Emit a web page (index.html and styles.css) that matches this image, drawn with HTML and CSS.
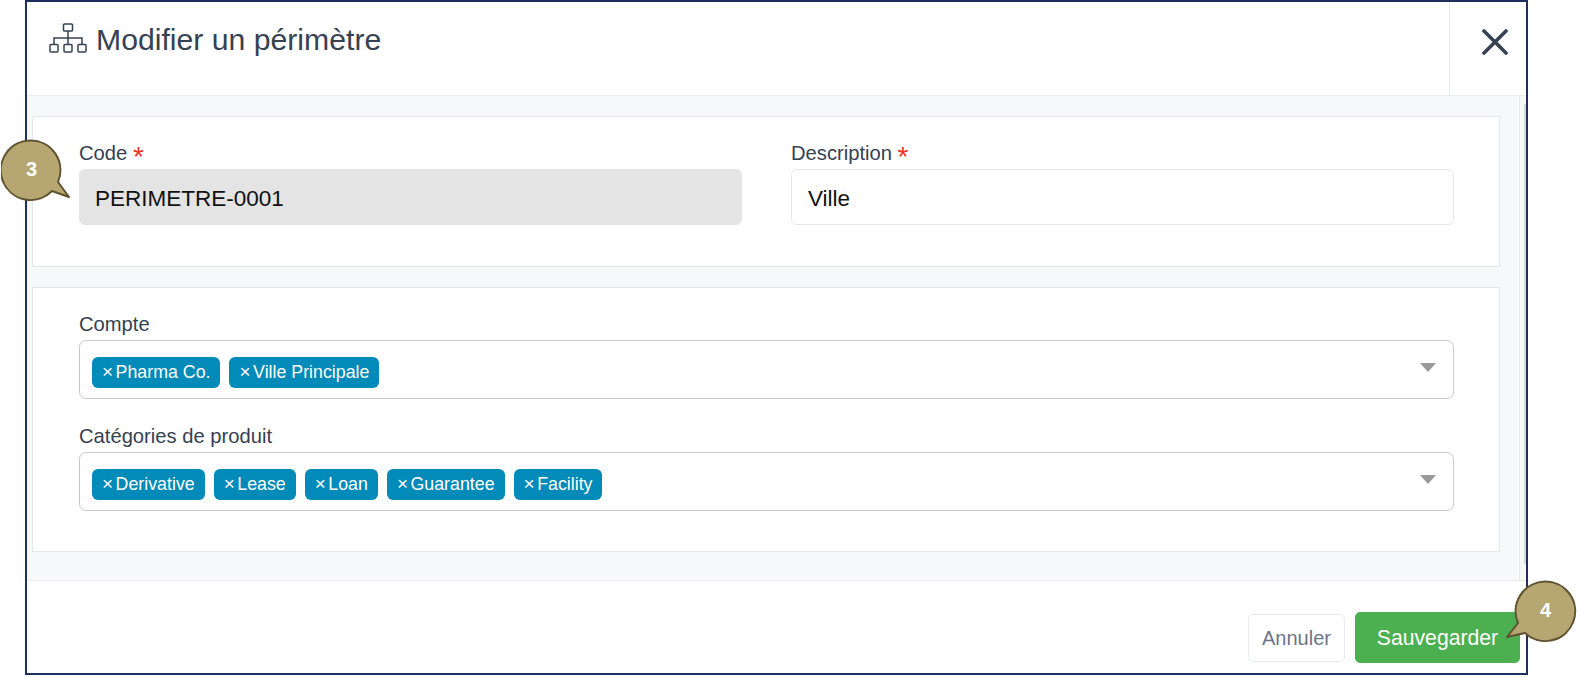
FILE: index.html
```html
<!DOCTYPE html>
<html lang="fr">
<head>
<meta charset="utf-8">
<title>Modifier un périmètre</title>
<link rel="stylesheet" href="styles.css">
</head>
<body>
<div class="modal">
  <header class="modal-header">
    <div class="title">
      <svg class="title-icon" viewBox="0 0 38 30" width="38" height="30" fill="none" stroke="#364152" stroke-width="1.5">
        <rect x="14.5" y="1" width="9" height="7" rx="1"/>
        <rect x="1" y="21.5" width="8" height="7.5" rx="1"/>
        <rect x="15" y="21.5" width="8" height="7.5" rx="1"/>
        <rect x="29" y="21.5" width="8" height="7.5" rx="1"/>
        <path d="M19 8v13.5M5 21.5v-6.5h28v6.5"/>
      </svg>
      <h1>Modifier un périmètre</h1>
    </div>
    <div class="close-cell">
      <svg viewBox="0 0 26 26" width="26" height="26" fill="none" stroke="#364152" stroke-width="3.6" stroke-linecap="round">
        <path d="M2 2l22 22M24 2L2 24"/>
      </svg>
    </div>
  </header>
  <div class="modal-body">
    <div class="scroll-area">
      <section class="panel panel-top">
        <div class="field">
          <label>Code <span class="req">*</span></label>
          <div class="input input-disabled">PERIMETRE-0001</div>
        </div>
        <div class="field">
          <label>Description <span class="req">*</span></label>
          <div class="input">Ville</div>
        </div>
      </section>
      <section class="panel panel-bottom">
        <div class="select-field">
          <label>Compte</label>
          <div class="select">
            <span class="tag"><i>×</i>Pharma Co.</span>
            <span class="tag"><i>×</i>Ville Principale</span>
            <span class="caret"></span>
          </div>
        </div>
        <div class="select-field">
          <label>Catégories de produit</label>
          <div class="select">
            <span class="tag"><i>×</i>Derivative</span>
            <span class="tag"><i>×</i>Lease</span>
            <span class="tag"><i>×</i>Loan</span>
            <span class="tag"><i>×</i>Guarantee</span>
            <span class="tag"><i>×</i>Facility</span>
            <span class="caret"></span>
          </div>
        </div>
      </section>
    </div>
    <div class="scrollbar"></div>
  </div>
  <footer class="modal-footer">
    <button class="btn btn-cancel">Annuler</button>
    <button class="btn btn-save">Sauvegarder</button>
  </footer>
</div>
<div class="bubble bubble-3">
  <svg viewBox="0 0 72 68" width="72" height="68"><path d="M57 43L68 58L51 52A29.8 29.8 0 1 1 57 43Z" fill="#b5a672" stroke="#5f5230" stroke-width="2" stroke-linejoin="round"/></svg>
  <span>3</span>
</div>
<div class="bubble bubble-4">
  <svg viewBox="0 0 72 68" width="72" height="68"><path d="M13 43A29.8 29.8 0 1 1 20 53L2 57Z" fill="#b5a672" stroke="#5f5230" stroke-width="2" stroke-linejoin="round"/></svg>
  <span>4</span>
</div>
</body>
</html>
```

FILE: styles.css
```css
* { box-sizing: border-box; }
html, body { margin: 0; padding: 0; background: #fff; }
body { font-family: "Liberation Sans", Arial, sans-serif; width: 1577px; height: 677px; overflow: hidden; position: relative; }
.modal {
  margin-left: 25px; width: 1503px; height: 675px;
  border: 2px solid #1e2f5e; background: #fff;
  display: flex; flex-direction: column;
}
.modal-header { height: 94px; display: flex; flex: none; border-bottom: 1px solid #e9ecef; }
.title { flex: 1; display: flex; align-items: flex-start; padding: 21px 0 0 22px; gap: 9px; }
.title-icon { flex: none; }
h1 { margin: 0; font-size: 30.2px; font-weight: 400; line-height: 34px; color: #364152; }
.close-cell { width: 77px; border-left: 1px solid #e9ecef; display: flex; align-items: center; justify-content: center; padding: 0 0 13px 14px; }
.modal-body { height: 485px; flex: none; display: flex; background: #f6f8fa; border-bottom: 1px solid #e9ecef; padding: 0 0 0 5px; }
.scroll-area { flex: 1; border-right: 1px solid #e9ecef; padding: 20px 19px 0 0; display: flex; flex-direction: column; gap: 20px; }
.scrollbar { width: 6px; margin: 8px 0 16px; border-right: 2px solid #d5d8dc; }
.panel { background: #fff; border: 1px solid #e4e7ea; }
.panel-top { height: 151px; display: flex; gap: 49px; padding: 20px 45px 0 46px; }
.panel-bottom { height: 265px; padding: 20px 45px 0 46px; }
.field { flex: 1; }
label { display: block; font-size: 20.2px; line-height: 32px; height: 32px; color: #364152; }
.req { color: #f0341f; font-size: 28px; line-height: 0; vertical-align: -6px; }
.input {
  height: 56px; border: 1px solid #e6e6e6; border-radius: 6px;
  padding: 3px 15px 0; display: flex; align-items: center; font-size: 22.5px; color: #111; background: #fff;
}
.field + .field .input { padding-left: 16px; }
.input-disabled { background: #e4e4e4; border-color: #e4e4e4; }
.select-field { margin-bottom: 21px; }
.select {
  height: 59px; border: 1px solid #c8c8c8; border-radius: 7px;
  padding: 16px 12px 0; display: flex; gap: 9px; position: relative; align-items: flex-start;
}
.tag {
  height: 31px; background: #028ab8; border-radius: 6px; color: #fff;
  font-size: 17.8px; line-height: 30px; padding: 0 10px; white-space: nowrap;
}
.tag i { font-style: normal; font-size: 19px; margin-right: 2.5px; }
.caret {
  position: absolute; right: 17px; top: 22px; width: 0; height: 0;
  border-left: 8px solid transparent; border-right: 8px solid transparent; border-top: 9px solid #999;
}
.modal-footer { flex: 1; display: flex; justify-content: flex-end; align-items: flex-start; gap: 10px; padding: 31px 6px 0 0; }
.btn { height: 51px; border-radius: 5px; font: 400 20px "Liberation Sans", Arial, sans-serif; padding: 0; }
.btn-cancel { width: 97px; height: 48px; margin-top: 2px; background: #fff; border: 1px solid #e9ecef; color: #6c7585; }
.btn-save { width: 165px; background: #4cb050; border: 1px solid #4cb050; color: #fff; font-size: 21.2px; }
.bubble { position: absolute; width: 72px; height: 68px; }
.bubble svg { display: block; }
.bubble span { position: absolute; color: #fff; font-weight: 700; font-size: 20px; line-height: 22px; }
.bubble-3 { left: 1px; top: 139px; }
.bubble-3 span { left: 25px; top: 19px; }
.bubble-4 { left: 1505px; top: 580px; }
.bubble-4 span { left: 35px; top: 19px; }
```
